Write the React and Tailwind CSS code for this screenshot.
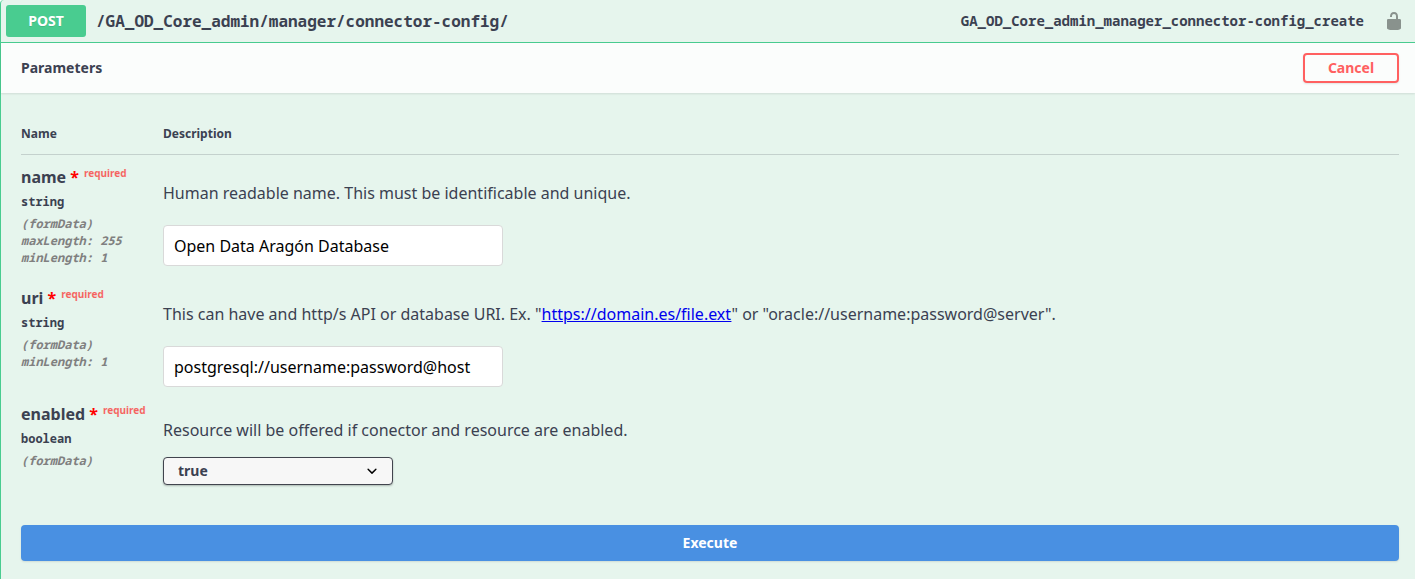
import React from "react";

const mono = "font-['Noto_Sans_Mono','DejaVu_Sans_Mono',monospace]";

const parameters = [
  {
    id: "name",
    type: "string",
    details: ["(formData)", "maxLength: 255", "minLength: 1"],
    description: "Human readable name. This must be identificable and unique.",
    value: "Open Data Aragón Database",
  },
  {
    id: "uri",
    type: "string",
    details: ["(formData)", "minLength: 1"],
    description: (
      <>
        This can have and http/s API or database URI. Ex. "
        <a href="https://domain.es/file.ext" className="text-[#0000ee] underline">
          https://domain.es/file.ext
        </a>
        " or "oracle://username:password@server".
      </>
    ),
    value: "postgresql://username:password@host",
  },
  {
    id: "enabled",
    type: "boolean",
    details: ["(formData)"],
    description: "Resource will be offered if conector and resource are enabled.",
    options: ["true", "false"],
  },
];

function UnlockedIcon() {
  return (
    <svg viewBox="0 0 20 20" className="size-5 fill-black opacity-40" aria-hidden="true">
      <path d="M15.8 8H14V5.6C14 2.703 12.665 1 10 1 7.334 1 6 2.703 6 5.6V6h2v-.801C8 3.754 8.797 3 10 3c1.203 0 2 .754 2 2.199V8H4c-.553 0-1 .646-1 1.199V17c0 .549.428 1.139.951 1.307l1.197.387C5.672 18.861 6.55 19 7.1 19h5.8c.549 0 1.428-.139 1.951-.307l1.196-.387c.524-.167.953-.757.953-1.306V9.199C17 8.646 16.352 8 15.8 8z" />
    </svg>
  );
}

function SelectField({ id, options }) {
  return (
    <div className="relative mt-[15px] w-[230px]">
      <select
        id={id}
        className="block h-7 w-full appearance-none rounded border border-[#41444e] bg-[#f7f7f7] pr-10 pl-[14px] text-sm leading-5 font-bold shadow-[0_1px_2px_0_rgba(0,0,0,0.25)]"
      >
        {options.map((option) => (
          <option key={option}>{option}</option>
        ))}
      </select>
      <svg
        viewBox="0 0 20 20"
        className="pointer-events-none absolute top-1 right-[11px] size-5"
        aria-hidden="true"
      >
        <path d="M13.418 7.859a.695.695 0 0 1 .978 0 .68.68 0 0 1 0 .969l-3.908 3.83a.697.697 0 0 1-.979 0l-3.908-3.83a.68.68 0 0 1 0-.969.695.695 0 0 1 .978 0L10 11l3.418-3.141z" />
      </svg>
    </div>
  );
}

function ParameterRow({ parameter }) {
  const { id, type, details, description, value, options } = parameter;
  return (
    <tr className="align-top">
      <td className="pt-[10px] pb-[10px]">
        <label htmlFor={id} className="block leading-6 font-bold whitespace-nowrap">
          {id} <span className="text-[#ff0000]">*</span>
          <span className="relative -top-[6px] ml-[5px] text-[10px] leading-none text-[#ff0000]/60">
            required
          </span>
        </label>
        <div className={`${mono} mt-[5px] text-xs leading-4 font-bold`}>{type}</div>
        <div className={`${mono} mt-[5px] text-xs leading-[17px] font-bold text-[#808080] italic`}>
          {details.map((line) => (
            <div key={line}>{line}</div>
          ))}
        </div>
      </td>
      <td className="pt-[10px] pb-[5px]">
        <p className="mt-4 leading-6">{description}</p>
        {options ? (
          <SelectField id={id} options={options} />
        ) : (
          <input
            id={id}
            type="text"
            defaultValue={value}
            className="mt-5 block h-[41px] w-[340px] rounded border border-[#d9d9d9] bg-white px-[10px] text-black"
          />
        )}
      </td>
    </tr>
  );
}

export default function App() {
  return (
    <main className="min-h-screen rounded-tl border-l border-[#49cc90] bg-[#e6f5ed] font-['Noto_Sans',sans-serif] text-base text-[#3b4151]">
      <header className="flex items-center gap-[10px] border-b border-[#49cc90] py-[5px] pr-[11px] pl-[5px]">
        <button
          type="button"
          className="h-8 w-20 rounded-[3px] bg-[#49cc90] text-sm font-bold text-white [text-shadow:0_1px_0_rgba(0,0,0,0.1)]"
        >
          POST
        </button>
        <h1 className={`${mono} flex-1 font-bold`}>/GA_OD_Core_admin/manager/connector-config/</h1>
        <span className={`${mono} text-sm font-bold`}>
          GA_OD_Core_admin_manager_connector-config_create
        </span>
        <button type="button" aria-label="Authorize" className="ml-[10px]">
          <UnlockedIcon />
        </button>
      </header>

      <div className="flex items-center justify-between bg-[#fbfdfc] py-[10px] pr-4 pl-5 shadow-[0_1px_2px_rgba(0,0,0,0.1)]">
        <h2 className="text-sm font-bold">Parameters</h2>
        <button
          type="button"
          className="h-[30px] w-24 rounded border-2 border-[#ff6060] text-sm font-bold text-[#ff6060] shadow-[0_1px_2px_rgba(0,0,0,0.1)]"
        >
          Cancel
        </button>
      </div>

      <div className="pt-5 pr-4 pb-[18px] pl-5">
        <table className="w-full border-collapse text-left">
          <thead>
            <tr className="border-b border-[#3b4151]/20 text-xs leading-4">
              <th className="w-[142px] pt-[13px] pb-3 font-bold">Name</th>
              <th className="pt-[13px] pb-3 font-bold">Description</th>
            </tr>
          </thead>
          <tbody>
            {parameters.map((parameter) => (
              <ParameterRow key={parameter.id} parameter={parameter} />
            ))}
          </tbody>
        </table>
        <button
          type="button"
          className="mt-[35px] h-9 w-full rounded bg-[#4990e2] text-sm font-bold text-white shadow-[0_1px_2px_rgba(0,0,0,0.1)]"
        >
          Execute
        </button>
      </div>
    </main>
  );
}
